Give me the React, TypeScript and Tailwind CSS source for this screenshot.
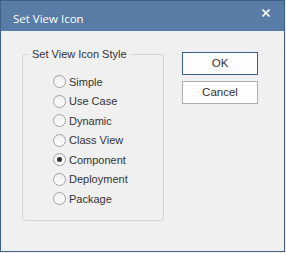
const options = ["Simple", "Use Case", "Dynamic", "Class View", "Component", "Deployment", "Package"];

function Radio({ checked }: { checked?: boolean }) {
  return (
    <span className="flex h-[13px] w-[13px] shrink-0 items-center justify-center rounded-full border border-[#a2a2a2] bg-gradient-to-b from-[#f0f0f0] to-[#fdfdfd]">
      {checked && <span className="h-[5px] w-[5px] rounded-full bg-[#333]" />}
    </span>
  );
}

export default function App() {
  return (
    <div className="h-[253px] w-[286px] bg-[#f3f3f3]">
      <div className="flex h-[252px] w-[285px] flex-col border border-[#3f5f86] bg-[#f0f0f0]">
        <div className="flex h-[30px] shrink-0 items-start justify-between bg-[#587ca6] pl-[12px] pr-[14px]">
          <span className="mt-[10px] text-[11.5px] leading-[16px] text-white [font-family:'Open_Sans',sans-serif]">
            Set View Icon
          </span>
          <svg className="mt-[7.5px]" width="8" height="8" viewBox="0 0 8 8">
            <path d="M0.5 0.5L7.5 7.5M7.5 0.5L0.5 7.5" stroke="white" strokeWidth="1.6" />
          </svg>
        </div>
        <div className="flex flex-1 gap-[18px] pl-[21px] pt-[16px] text-[11px] text-[#333] [font-family:'Liberation_Sans',Arial,sans-serif]">
          <fieldset className="h-[174px] w-[142px] rounded-[3px] border border-[#d5d5d5]">
            <legend className="ml-[5px] px-[4px] leading-[14px]">Set View Icon Style</legend>
            <div className="flex flex-col pl-[30px] pt-[11px]">
              {options.map((o) => (
                <label key={o} className="flex h-[19.5px] items-center gap-[3px]">
                  <Radio checked={o === "Component"} />
                  <span>{o}</span>
                </label>
              ))}
            </div>
          </fieldset>
          <div className="mt-[5px] flex flex-col gap-[6px]">
            <button className="h-[23px] w-[76px] border border-[#3c5f89] bg-[#fdfdfd] text-[11.5px] text-[#333]">
              OK
            </button>
            <button className="h-[23px] w-[76px] border border-[#adadad] bg-[#fdfdfd] text-[11.5px] text-[#333]">
              Cancel
            </button>
          </div>
        </div>
      </div>
    </div>
  );
}
